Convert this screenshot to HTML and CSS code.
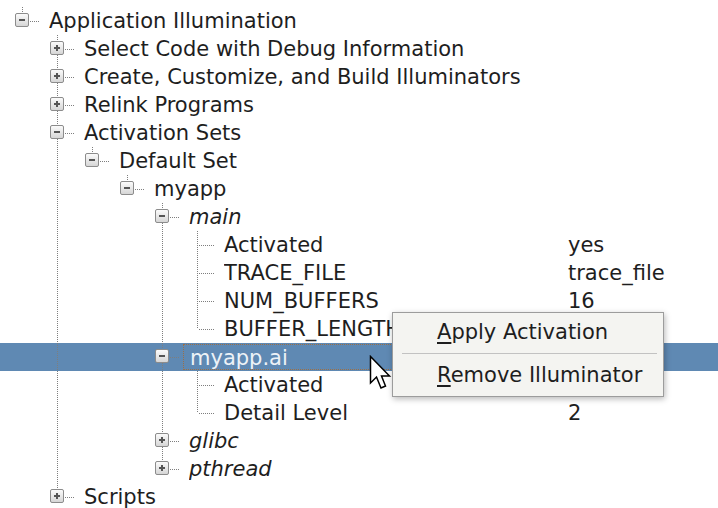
FILE: index.html
```html
<!DOCTYPE html>
<html lang="en">
<head>
	<meta charset="UTF-8">
	<title>Application Illumination</title>
	<link rel="stylesheet" href="styles.css">
</head>
<body>
<div class="tree">
	<div class="row">
		<div class="cell"><span class="node last open"><i class="exp"></i></span><span class="name">Application Illumination</span></div>
		<div class="val"></div>
	</div>
	<div class="row">
		<div class="cell"><span class="g"></span><span class="node mid closed"><i class="exp"></i></span><span class="name">Select Code with Debug Information</span></div>
		<div class="val"></div>
	</div>
	<div class="row">
		<div class="cell"><span class="g"></span><span class="node mid closed"><i class="exp"></i></span><span class="name">Create, Customize, and Build Illuminators</span></div>
		<div class="val"></div>
	</div>
	<div class="row">
		<div class="cell"><span class="g"></span><span class="node mid closed"><i class="exp"></i></span><span class="name">Relink Programs</span></div>
		<div class="val"></div>
	</div>
	<div class="row">
		<div class="cell"><span class="g"></span><span class="node mid open"><i class="exp"></i></span><span class="name">Activation Sets</span></div>
		<div class="val"></div>
	</div>
	<div class="row">
		<div class="cell"><span class="g"></span><span class="g pipe"></span><span class="node last open"><i class="exp"></i></span><span class="name">Default Set</span></div>
		<div class="val"></div>
	</div>
	<div class="row">
		<div class="cell"><span class="g"></span><span class="g pipe"></span><span class="g"></span><span class="node last open"><i class="exp"></i></span><span class="name">myapp</span></div>
		<div class="val"></div>
	</div>
	<div class="row">
		<div class="cell"><span class="g"></span><span class="g pipe"></span><span class="g"></span><span class="g"></span><span class="node mid open"><i class="exp"></i></span><span class="name lib">main</span></div>
		<div class="val"></div>
	</div>
	<div class="row">
		<div class="cell"><span class="g"></span><span class="g pipe"></span><span class="g"></span><span class="g"></span><span class="g pipe"></span><span class="node mid leaf"></span><span class="name">Activated</span></div>
		<div class="val">yes</div>
	</div>
	<div class="row">
		<div class="cell"><span class="g"></span><span class="g pipe"></span><span class="g"></span><span class="g"></span><span class="g pipe"></span><span class="node mid leaf"></span><span class="name">TRACE_FILE</span></div>
		<div class="val">trace_file</div>
	</div>
	<div class="row">
		<div class="cell"><span class="g"></span><span class="g pipe"></span><span class="g"></span><span class="g"></span><span class="g pipe"></span><span class="node mid leaf"></span><span class="name">NUM_BUFFERS</span></div>
		<div class="val">16</div>
	</div>
	<div class="row">
		<div class="cell"><span class="g"></span><span class="g pipe"></span><span class="g"></span><span class="g"></span><span class="g pipe"></span><span class="node last leaf"></span><span class="name">BUFFER_LENGTH</span></div>
		<div class="val"></div>
	</div>
	<div class="row sel">
		<div class="cell"><span class="g"></span><span class="g pipe"></span><span class="g"></span><span class="g"></span><span class="node mid open"><i class="exp"></i></span><span class="name focus">myapp.ai</span></div>
		<div class="val"></div>
	</div>
	<div class="row">
		<div class="cell"><span class="g"></span><span class="g pipe"></span><span class="g"></span><span class="g"></span><span class="g pipe"></span><span class="node mid leaf"></span><span class="name">Activated</span></div>
		<div class="val"></div>
	</div>
	<div class="row">
		<div class="cell"><span class="g"></span><span class="g pipe"></span><span class="g"></span><span class="g"></span><span class="g pipe"></span><span class="node last leaf"></span><span class="name">Detail Level</span></div>
		<div class="val">2</div>
	</div>
	<div class="row">
		<div class="cell"><span class="g"></span><span class="g pipe"></span><span class="g"></span><span class="g"></span><span class="node mid closed"><i class="exp"></i></span><span class="name lib">glibc</span></div>
		<div class="val"></div>
	</div>
	<div class="row">
		<div class="cell"><span class="g"></span><span class="g pipe"></span><span class="g"></span><span class="g"></span><span class="node last closed"><i class="exp"></i></span><span class="name lib">pthread</span></div>
		<div class="val"></div>
	</div>
	<div class="row">
		<div class="cell"><span class="g"></span><span class="node last closed"><i class="exp"></i></span><span class="name">Scripts</span></div>
		<div class="val"></div>
	</div>
</div><!--.tree end-->

<ul class="menu">
	<li><u>A</u>pply Activation</li>
	<li class="sep"></li>
	<li><u>R</u>emove Illuminator</li>
</ul><!--.menu end-->

<svg class="cursor" width="24" height="36" viewBox="0 0 24 36">
	<path d="M1.5 1.5 L1.5 28 L7.5 22 L12 33 L16.5 31 L12.5 21 L20.5 21 Z" fill="#fff" stroke="#000" stroke-width="1.5" stroke-linejoin="miter"/>
</svg>
</body>
</html>
```

FILE: styles.css
```css
*,
::before,
::after {
	box-sizing: border-box;
}
body {
	width: 718px;
	height: 508px;
	margin: 0;
	position: relative;
	overflow: hidden;
	background: #fff;
	color: #1e1e1e;
	font-family: "DejaVu Sans", sans-serif;
	font-size: 21px;
}
.tree {
	padding-top: 7px;
}
.row {
	height: 28px;
	line-height: 28px;
	display: grid;
	grid-template-columns: 568px 1fr;
	white-space: nowrap;
}
.cell {
	display: flex;
	min-width: 0;
}
.g,
.node {
	flex: none;
	width: 35px;
	height: 28px;
	position: relative;
}
.node {
	width: 49px;
}
.pipe::before,
.node::before {
	content: "";
	position: absolute;
	left: 22px;
	top: 0;
	width: 1px;
	height: 28px;
	background: repeating-linear-gradient(to bottom, #7e7e7e 0 1px, transparent 1px 2px);
}
.node.last::before {
	height: 14px;
}
.node::after {
	content: "";
	position: absolute;
	left: 24px;
	top: 14px;
	width: 15px;
	height: 1px;
	background: repeating-linear-gradient(to right, #7e7e7e 0 1px, transparent 1px 2px);
}
.exp {
	position: absolute;
	left: 15px;
	top: 6px;
	width: 14px;
	height: 14px;
	z-index: 1;
	border: 1px solid #8c8c8c;
	border-radius: 2px;
	background: linear-gradient(#fbfbfb, #d6d6d6);
}
.exp::before {
	content: "";
	position: absolute;
	left: 3px;
	top: 5px;
	width: 6px;
	height: 2px;
	background: #555;
}
.closed .exp::after {
	content: "";
	position: absolute;
	left: 5px;
	top: 3px;
	width: 2px;
	height: 6px;
	background: #555;
}
.name {
	overflow: hidden;
}
.lib {
	font-style: italic;
}
.sel {
	background: #5f89b3;
	color: #edf2f7;
}
.focus {
	flex: 1;
	height: 26px;
	line-height: 26px;
	margin: 1px 13px 0 -6px;
	padding-left: 6px;
	border: 1px dotted #9c6f45;
}
.menu {
	position: absolute;
	left: 392px;
	top: 312px;
	width: 272px;
	margin: 0;
	padding: 1px 0 3px;
	list-style: none;
	background: #f4f4f1;
	border: 1px solid #9c9c9c;
	box-shadow: 1px 2px 6px rgba(0, 0, 0, 0.28);
	li {
		height: 36px;
		line-height: 36px;
		padding-left: 44px;
	}
	u {
		text-underline-offset: 3px;
	}
	.sep {
		height: 7px;
		margin: 0 6px 0 9px;
		padding: 0;
		background: linear-gradient(#c2c2c2, #c2c2c2) 0 3px / 100% 1px no-repeat;
	}
}
.cursor {
	position: absolute;
	left: 369px;
	top: 355px;
}
```
